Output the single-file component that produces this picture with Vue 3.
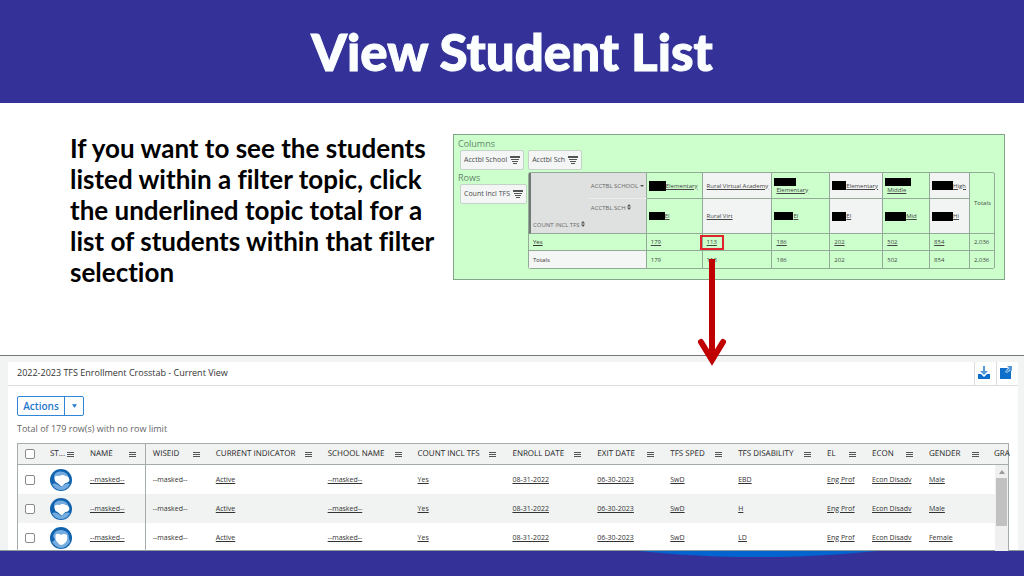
<script setup>
const schoolCols = [
  { mask: [17, 10], name: 'Elementary', mask2: [16, 8], short: 'El', total: '179' },
  { name: 'Rural Virtual Academy', short: 'Rural Virt', total: '113', plain: true, marked: true },
  { mask: [22, 8], name: 'Elementary', mask2: [19, 8], short: 'El', total: '186', stacked: true },
  { mask: [14, 9], name: 'Elementary', mask2: [14, 9], short: 'El', total: '202', plain: true },
  { mask: [26, 8], name: 'Middle', mask2: [21, 9], short: 'Mid', total: '502', stacked: true },
  { mask: [21, 9], name: 'High', mask2: [21, 9], short: 'Hi', total: '854', plain: true },
]
const crossWidths = [60, 58, 56, 70, 58, 53, 47, 40, 25]

const columns = [
  { label: 'ST...', width: 40 },
  { label: 'NAME', width: 63 },
  { label: 'WISEID', width: 63 },
  { label: 'CURRENT INDICATOR', width: 112 },
  { label: 'SCHOOL NAME', width: 90 },
  { label: 'COUNT INCL TFS', width: 95 },
  { label: 'ENROLL DATE', width: 85 },
  { label: 'EXIT DATE', width: 73 },
  { label: 'TFS SPED', width: 68 },
  { label: 'TFS DISABILITY', width: 89 },
  { label: 'EL', width: 45 },
  { label: 'ECON', width: 57 },
  { label: 'GENDER', width: 66 },
  { label: 'GRA', width: 20, last: true },
]
const students = [
  { disability: 'EBD', gender: 'Male' },
  { disability: 'H', gender: 'Male' },
  { disability: 'LD', gender: 'Female' },
].map((s) => ['Active', '--masked--', 'Yes', '08-31-2022', '06-30-2023', 'SwD', s.disability, 'Eng Prof', 'Econ Disadv', s.gender])
</script>

<template>
  <div class="slide">
    <header class="banner"><h1>View Student List</h1></header>

    <main>
      <section class="intro">
        <p class="lead">If you want to see the students listed within a filter topic, click the underlined topic total for a list of students within that filter selection</p>

        <div class="crosstab">
          <div class="dim-label">Columns</div>
          <div class="chips">
            <button v-for="c in ['Acctbl School', 'Acctbl Sch']" :key="c" type="button" class="chip">
              {{ c }}
              <svg class="filter" viewBox="0 0 10 8"><path d="M0 0h10v2H0zM1 3h8v1H1zM2 5h6v1H2zM3 7h4v1H3z" /></svg>
            </button>
          </div>
          <div class="cross-body">
            <div class="side">
              <div class="dim-label">Rows</div>
              <button type="button" class="chip">
                Count Incl TFS
                <svg class="filter" viewBox="0 0 10 8"><path d="M0 0h10v2H0zM1 3h8v1H1zM2 5h6v1H2zM3 7h4v1H3z" /></svg>
              </button>
            </div>
            <table class="cross">
              <colgroup><col v-for="(w, i) in crossWidths" :key="i" :style="{ width: (w / 467) * 100 + '%' }"></colgroup>
              <thead>
                <tr class="r1">
                  <th rowspan="2" class="corner count">COUNT INCL TFS <svg class="sort" viewBox="0 0 4 6"><path d="M2 0l2 2.5H0zM2 6L0 3.5h4z" /></svg></th>
                  <th class="corner sub">ACCTBL SCHOOL <svg class="sort" viewBox="0 0 4 6"><path d="M0 3h4L2 5z" /></svg></th>
                  <th v-for="(s, i) in schoolCols" :key="i" :class="{ plain: s.plain, masked: s.mask }">
                    <div class="school" :class="{ stacked: s.stacked }">
                      <i v-if="s.mask" :style="{ width: s.mask[0] + 'px', height: s.mask[1] + 'px' }"></i><a href="#">{{ s.name }}</a>
                    </div>
                  </th>
                  <th rowspan="2" class="totals">Totals</th>
                </tr>
                <tr class="r2">
                  <th class="corner sub second">ACCTBL SCH <svg class="sort" viewBox="0 0 4 6"><path d="M2 0l2 2.5H0zM2 6L0 3.5h4z" /></svg></th>
                  <th v-for="(s, i) in schoolCols" :key="i" :class="{ plain: s.plain, masked: s.mask }">
                    <div class="school">
                      <i v-if="s.mask2" :style="{ width: s.mask2[0] + 'px', height: s.mask2[1] + 'px' }"></i><a href="#">{{ s.short }}</a>
                    </div>
                  </th>
                </tr>
              </thead>
              <tbody>
                <tr>
                  <th colspan="2" class="yes"><a href="#">Yes</a></th>
                  <td v-for="(s, i) in schoolCols" :key="i" :class="{ marked: s.marked }">
                    <a href="#">{{ s.total }}</a>
                    <template v-if="s.marked">
                      <span class="box"></span>
                      <svg class="arrow" viewBox="0 0 32 108"><path d="M16 0V100" /><path class="head" d="M5 83L16 101L27 83" /><path class="fill" d="M13 90h6l4 4-7 10-7-10z" /></svg>
                    </template>
                  </td>
                  <td>2,036</td>
                </tr>
                <tr>
                  <th colspan="2" class="sum">Totals</th>
                  <td v-for="(s, i) in schoolCols" :key="i">{{ s.total }}</td>
                  <td>2,036</td>
                </tr>
              </tbody>
            </table>
          </div>
        </div>
      </section>

      <section class="view">
        <div class="card">
          <div class="view-head">
            <h2>2022-2023 TFS Enrollment Crosstab - Current View</h2>
            <button type="button" class="tool" aria-label="Download">
              <svg viewBox="0 0 14 14"><path class="pale" d="M6 1h2v5h3L7 10 3 6h3z" /><path d="M1 9h3l3 3 3-3h3v5H1z" /></svg>
            </button>
            <button type="button" class="tool" aria-label="Open">
              <svg viewBox="0 0 14 14"><path d="M1 3h8L6 7l2 1 4-3v9H1z" /><path class="pale" d="M8 1h5v5l-2-1-3 3-2-1 4-4z" /></svg>
            </button>
          </div>
          <div class="content">
            <div class="actions">
              <button type="button">Actions</button>
              <button type="button" class="more" aria-label="More actions"><svg viewBox="0 0 6 4"><path d="M0 0h6L3 4z" /></svg></button>
            </div>
            <p class="count-line">Total of 179 row(s) with no row limit</p>
            <div class="grid-wrap">
              <table class="grid">
                <colgroup>
                  <col :style="{ width: (25 / 991) * 100 + '%' }">
                  <col v-for="c in columns" :key="c.label" :style="{ width: (c.width / 991) * 100 + '%' }">
                </colgroup>
                <thead>
                  <tr>
                    <th><input type="checkbox" aria-label="Select all rows"></th>
                    <th v-for="(c, i) in columns" :key="c.label" :class="{ pin: i === 1 }">
                      <div class="head-cell">
                        <span>{{ c.label }}</span>
                        <button v-if="!c.last" type="button" class="menu" :aria-label="c.label + ' menu'"><svg viewBox="0 0 7 7"><path d="M0 1.5h7M0 3.5h7M0 5.5h7" /></svg></button>
                      </div>
                    </th>
                  </tr>
                </thead>
                <tbody>
                  <tr v-for="(row, r) in students" :key="r">
                    <td><input type="checkbox" :aria-label="'Select row ' + (r + 1)"></td>
                    <td>
                      <svg class="badge" viewBox="0 0 22 22">
                        <circle cx="11" cy="11" r="11" fill="#1263ae" />
                        <template v-if="r < 2">
                          <path d="M4 8Q4 3 10 2.500Q17 2 19 9L14 9H6z" fill="#75ace0" />
                          <path d="M2 15q4-2 9 3 5-5 9-3-3 6-9 6T2 15z" fill="#75ace0" />
                          <path d="M4.500 8q2-2 5-1 3-2 6 0 3 0 4 4-1 3-4 3l-4 3.500-4-3.500Q4 13 4.500 8z" fill="#fff" />
                        </template>
                        <template v-else>
                          <path d="M3 9Q5 2 12 3t7 8l1 4q-4 6-9 6t-9-6l3-2z" fill="#75ace0" />
                          <path d="M6 7q3-1 5 1 3-2 6 0 1 5-2 8-4 4-7 0-4-4-2-9z" fill="#fff" />
                        </template>
                      </svg>
                    </td>
                    <td class="pin"><a href="#">--masked--</a></td>
                    <td>--masked--</td>
                    <td v-for="(v, i) in row" :key="i"><a href="#">{{ v }}</a></td>
                    <td></td>
                  </tr>
                </tbody>
              </table>
              <div class="scroll"><svg viewBox="0 0 6 4"><path d="M3 0l3 4H0z" /></svg><span></span></div>
            </div>
          </div>
        </div>
      </section>
    </main>
    <footer class="foot"><span></span></footer>
  </div>
</template>

<style>
body { margin: 0; background: #fff; }
</style>

<style scoped>
* { box-sizing: border-box; }
.slide { min-height: 100vh; display: flex; flex-direction: column; font-family: "Open Sans", sans-serif; color: #444; overflow: hidden; }
button { font-family: inherit; margin: 0; cursor: pointer; }
a { color: inherit; text-decoration: underline; }
svg { display: block; flex: none; }
.banner { background: #343299; height: 103px; display: flex; align-items: center; justify-content: center; }
h1 { margin: 0; font: 900 51px/64px Lato, sans-serif; color: #fbffff; -webkit-text-stroke: 1px #fbffff; }
.intro { display: grid; grid-template-columns: 383fr 552fr; padding: 31px 19px 0 70px; height: 252px; align-items: start; }
.lead { margin: -1px 0 0; font: 700 26px/31px Lato, sans-serif; color: #000; font-variant-ligatures: none; }

.crosstab { background: #cfc; border: 1px solid #85a389; padding: 3px 9px 10px 4px; font-size: 7px; line-height: 10px; }
.dim-label { font-size: 9px; line-height: 12px; color: #64856a; }
.chips { display: flex; gap: 4px; padding-left: 2px; }
.chip { display: flex; align-items: center; gap: 3px; height: 20px; padding: 0 3px; border: 1px solid #c3d3c5; border-radius: 2px; background: #f4f6f6; font-size: 7px; line-height: 10px; color: #4a4a4a; white-space: nowrap; }
.filter { width: 10px; height: 8px; fill: #555; }
.cross-body { display: flex; align-items: flex-start; padding-top: 2px; }
.side { width: 70px; flex: none; }
.side .chip { margin-left: 2px; }
.cross { flex: 1; width: 100%; table-layout: fixed; border-collapse: separate; border-spacing: 0; border: 1px solid #94aa98; border-right: 0; border-radius: 3px; font-size: 6px; }
.cross th, .cross td { padding: 0 0 0 4px; border-right: 1px solid #94aa98; border-bottom: 1px solid #94aa98; font-weight: 400; text-align: left; color: #444; white-space: nowrap; }
.cross tbody tr:last-child > * { border-bottom: 0; }
.cross .r1 { height: 26px; }
.cross .r2 { height: 35px; }
.cross tbody tr { height: 17px; }
.cross .corner { background: #dfe0e0; color: #666; border-right: 0; }
.cross .count { border-left: 2px solid #707a72; vertical-align: bottom; padding: 0 0 3px 2px; }
.cross .sub { border-right: 1px solid #94aa98; padding-left: 2px; }
.cross .r1 .sub { border-bottom-color: #ececec; }
.cross .second { vertical-align: top; padding-top: 4px; }
.cross .plain { background: #f2f3f3; }
.cross .masked { padding-left: 2px; }
.cross .yes { color: #333; }
.cross .sum { background: #f4f5f5; color: #333; }
.sort { display: inline-block; width: 4px; height: 6px; fill: #555; }
.school { display: flex; align-items: center; }
.school i { background: #000; flex: none; }
.school.stacked { flex-direction: column; align-items: flex-start; }
.school.stacked a { padding-left: 2px; line-height: 8px; }
.marked { position: relative; }
.box { position: absolute; left: -3px; top: 1px; width: 24px; height: 15px; border: 2px solid #e0242b; }
.arrow { position: absolute; left: -7px; top: 25px; width: 32px; height: 108px; fill: none; stroke: #c00000; stroke-width: 6; z-index: 2; }
.arrow .head { stroke-linecap: round; stroke-linejoin: miter; }
.arrow .fill { fill: #c00000; stroke: none; }

.view { background: #f2f3f3; border-top: 1px solid #777; border-bottom: 1px solid #8d9a9c; padding: 6px 6px 0 8px; height: 196px; }
.card { background: #fff; height: 100%; }
.view-head { display: flex; height: 24px; border-bottom: 1px solid #dcdede; padding-left: 9px; }
h2 { flex: 1; margin: 0; font-size: 9px; line-height: 22px; font-weight: 500; color: #333; }
.tool { width: 22px; padding: 0 0 3px 2px; border: 0; border-left: 1px solid #dcdede; background: none; }
.tool svg { width: 14px; height: 14px; fill: #0d6fc9; }
.tool .pale { fill: #5199da; }
.content { padding: 10px 9px 0; }
.actions { display: flex; width: 67px; height: 20px; border: 1px solid #2f86d6; border-radius: 2px; }
.actions button { flex: 1; padding: 0; border: 0; background: none; color: #1f78cd; font-size: 10px; line-height: 14px; font-weight: 600; }
.actions .more { flex: none; width: 19px; border-left: 1px solid #2f86d6; display: flex; align-items: center; justify-content: center; }
.more svg { width: 5px; height: 4px; fill: #1f78cd; }
.count-line { margin: 6px 0 7px; font-size: 9px; line-height: 14px; color: #666; }
.grid-wrap { position: relative; border: 1px solid #a5acac; border-bottom: 0; }
.grid { width: 100%; table-layout: fixed; border-collapse: separate; border-spacing: 0; font-size: 7px; line-height: 12px; }
.grid th, .grid td { padding: 0 0 0 7px; text-align: left; white-space: nowrap; }
.grid th { height: 21px; background: #f1f3f3; border-bottom: 1px solid #a5acac; font-size: 8px; font-weight: 400; color: #222; text-rendering: geometricPrecision; }
.grid td { height: 29px; color: #333; }
.grid tbody tr:nth-child(2) { background: #f1f3f3; }
.grid .pin { border-right: 1px solid #a5acac; }
.grid th:last-child { padding-left: 6px; }
.head-cell { display: flex; align-items: center; justify-content: space-between; }
.menu { padding: 0 9px 0 0; border: 0; background: none; }
.menu svg { width: 7px; height: 7px; stroke: #555; fill: none; }
.badge { width: 22px; height: 22px; }
input { appearance: none; display: block; width: 10px; height: 10px; margin: 0; border: 1px solid #8a8a8a; border-radius: 2px; background: #fff; }
.scroll { position: absolute; right: 0; top: 21px; bottom: 0; width: 13px; background: #f0f0f0; }
.scroll svg { width: 6px; height: 4px; margin: 5px auto 4px; fill: #999; }
.scroll span { display: block; height: 48px; margin: 0 1px; background: #c1c1c1; }
.foot { position: relative; flex: 1; min-height: 25px; background: #343299; overflow: hidden; }
.foot span { position: absolute; left: 54%; top: -58px; width: 40%; height: 64px; border-radius: 50%; background: #0563cf; }
</style>
